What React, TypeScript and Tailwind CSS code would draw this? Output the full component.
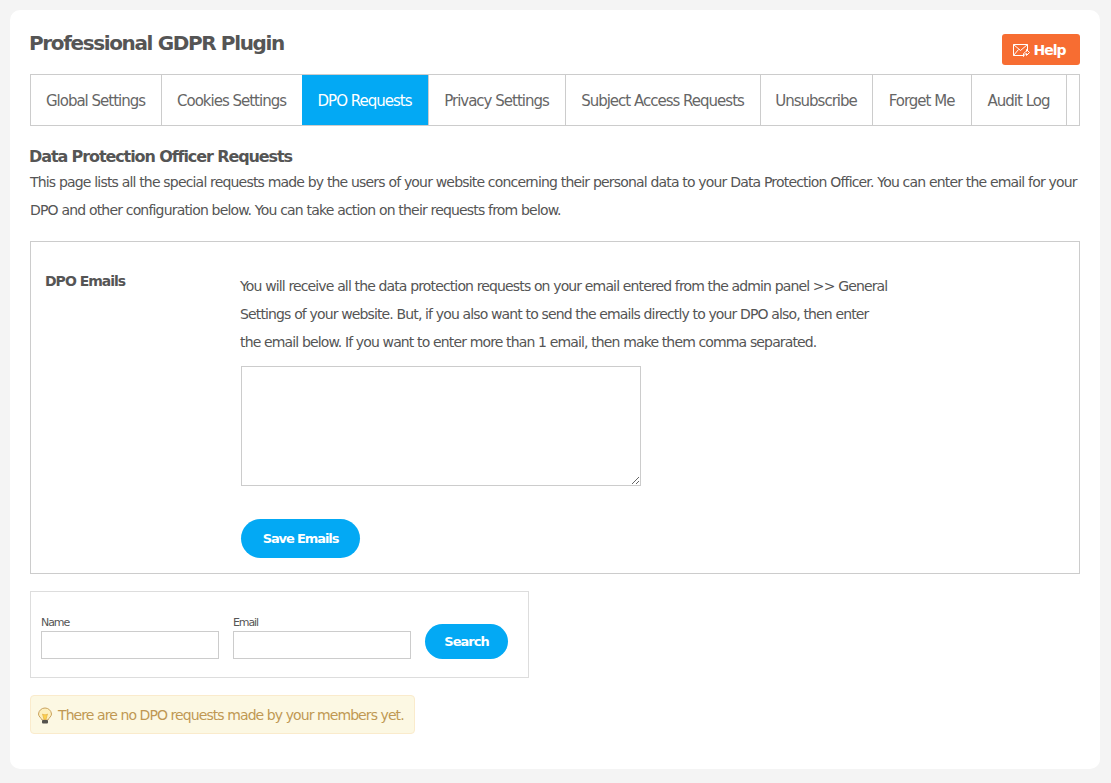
const tabs = [
  { label: "Global Settings", width: "w-[131px]" },
  { label: "Cookies Settings", width: "w-[141px]" },
  { label: "DPO Requests", width: "-ml-px w-[127px]", active: true },
  { label: "Privacy Settings", width: "w-[137px]" },
  { label: "Subject Access Requests", width: "w-[195px]" },
  { label: "Unsubscribe", width: "w-[112px]" },
  { label: "Forget Me", width: "w-[99px]" },
  { label: "Audit Log", width: "w-[95px]" },
];

const HelpIcon = () => (
  <svg width="17" height="13" viewBox="0 0 17 13" fill="none" stroke="#fff" strokeWidth="1">
    <path d="M10 11.5H.5v-11h14V6" />
    <path d="M.5.5l7 6 7-6M.5 11.5l5-6" />
    <path d="M10.5 12.5v-2.500c1-2 2.500-2.500 3-2.500V5.500l3 3-3 3V9.500c-1 0-2 1-3 3z" fill="#f76d32" />
  </svg>
);

const BulbIcon = () => (
  <svg width="16" height="17" viewBox="0 0 16 17" className="shrink-0">
    <path d="M8 1a6.500 6.500 0 0 0-6.500 6c0 2.500 2.500 3.500 3.500 6h6c1-2.500 3.500-3.500 3.500-6A6.500 6.500 0 0 0 8 1z" fill="#fdf0bd" stroke="#c9a25e" />
    <path d="M5.500 7c1.500 1 3.500 1 5 0L9 12.500H7z" fill="#fbd24e" stroke="#e2a83a" strokeWidth=".6" />
    <rect x="5" y="13" width="6" height="3.500" rx="1" fill="#55534e" />
  </svg>
);

export default function App() {
  return (
    <div className="min-h-[783px] bg-[#f4f4f4] p-[10px] pb-[14px] font-['DejaVu_Sans',sans-serif] text-[#555]">
      <div className="h-[759px] w-[1090px] rounded-[10px] bg-white px-[20px]">
        <div className="flex h-[64px] justify-between">
          <h1 className="-ml-px pt-[21px] text-[20px] leading-[24px] font-bold tracking-[-1.37px] text-[#555]">
            Professional GDPR Plugin
          </h1>
          <a className="mt-[24px] flex h-[31px] w-[78px] items-center justify-center gap-[3px] rounded-[3px] bg-[#f76d32] pt-[1px] pr-[3px] text-[14px] font-bold tracking-[-1px] text-white">
            <HelpIcon />
            Help
          </a>
        </div>
        <div className="flex h-[52px] border border-[#ccc]">
          {tabs.map((tab) => (
            <div
              key={tab.label}
              className={`${tab.width} flex items-center justify-center border-r pt-[3px] pr-[1px] text-[15px] tracking-[-1px] whitespace-nowrap ${
                tab.active
                  ? "border-[#ccc] bg-[#03a9f4] text-white"
                  : "border-[#ccc] text-[#666]"
              }`}
            >
              {tab.label}
            </div>
          ))}
        </div>
        <h2 className="mt-[21px] -ml-px text-[16px] leading-[20px] font-bold tracking-[-1.1px] text-[#555]">
          Data Protection Officer Requests
        </h2>
        <p className="mt-[1px] text-[14px] leading-[28px] tracking-[-0.82px] text-[#555]">
          This page lists all the special requests made by the users of your website concerning their personal data to
          your Data Protection Officer. You can enter the email for your DPO and other configuration below. You can take
          action on their requests from below.
        </p>
        <div className="mt-[17px] flex h-[333px] border border-[#ccc] px-[15px]">
          <div className="-ml-px w-[195px] pt-[29px] text-[14px] leading-[20px] font-bold tracking-[-1px]">DPO Emails</div>
          <div className="pt-[30px]">
            <p className="w-[652px] text-[14px] leading-[28px] tracking-[-0.86px]">
              You will receive all the data protection requests on your email entered from the admin panel &gt;&gt;
              General Settings of your website. But, if you also want to send the emails directly to your DPO also, then
              enter the email below. If you want to enter more than 1 email, then make them comma separated.
            </p>
            <textarea className="mt-[10px] ml-px block h-[120px] w-[400px] border border-[#ccc] bg-white" />
            <button className="mt-[33px] ml-px h-[39px] w-[119px] rounded-full bg-[#03a9f4] text-[13px] font-bold tracking-[-1.1px] text-white">
              Save Emails
            </button>
          </div>
        </div>
        <div className="mt-[17px] flex h-[87px] w-[499px] items-end gap-[14px] border border-[#ddd] pr-[20px] pb-[18px] pl-[10px]">
          <label className="block">
            <span className="block text-[11px] leading-[13px] tracking-[-1.1px]">Name</span>
            <input className="mt-[2px] block h-[28px] w-[178px] border border-[#ccc]" />
          </label>
          <label className="block">
            <span className="block text-[11px] leading-[13px] tracking-[-1.1px]">Email</span>
            <input className="mt-[2px] block h-[28px] w-[178px] border border-[#ccc]" />
          </label>
          <button className="h-[35px] w-[83px] rounded-full bg-[#03a9f4] text-[13px] font-bold tracking-[-1px] text-white">
            Search
          </button>
        </div>
        <div className="mt-[17px] flex h-[39px] w-[385px] items-center gap-[5px] rounded-[4px] border border-[#faebcc] bg-[#fcf8e3] pt-[1px] pl-[6px] text-[14px] tracking-[-0.92px] text-[#c09853]">
          <BulbIcon />
          There are no DPO requests made by your members yet.
        </div>
      </div>
    </div>
  );
}
